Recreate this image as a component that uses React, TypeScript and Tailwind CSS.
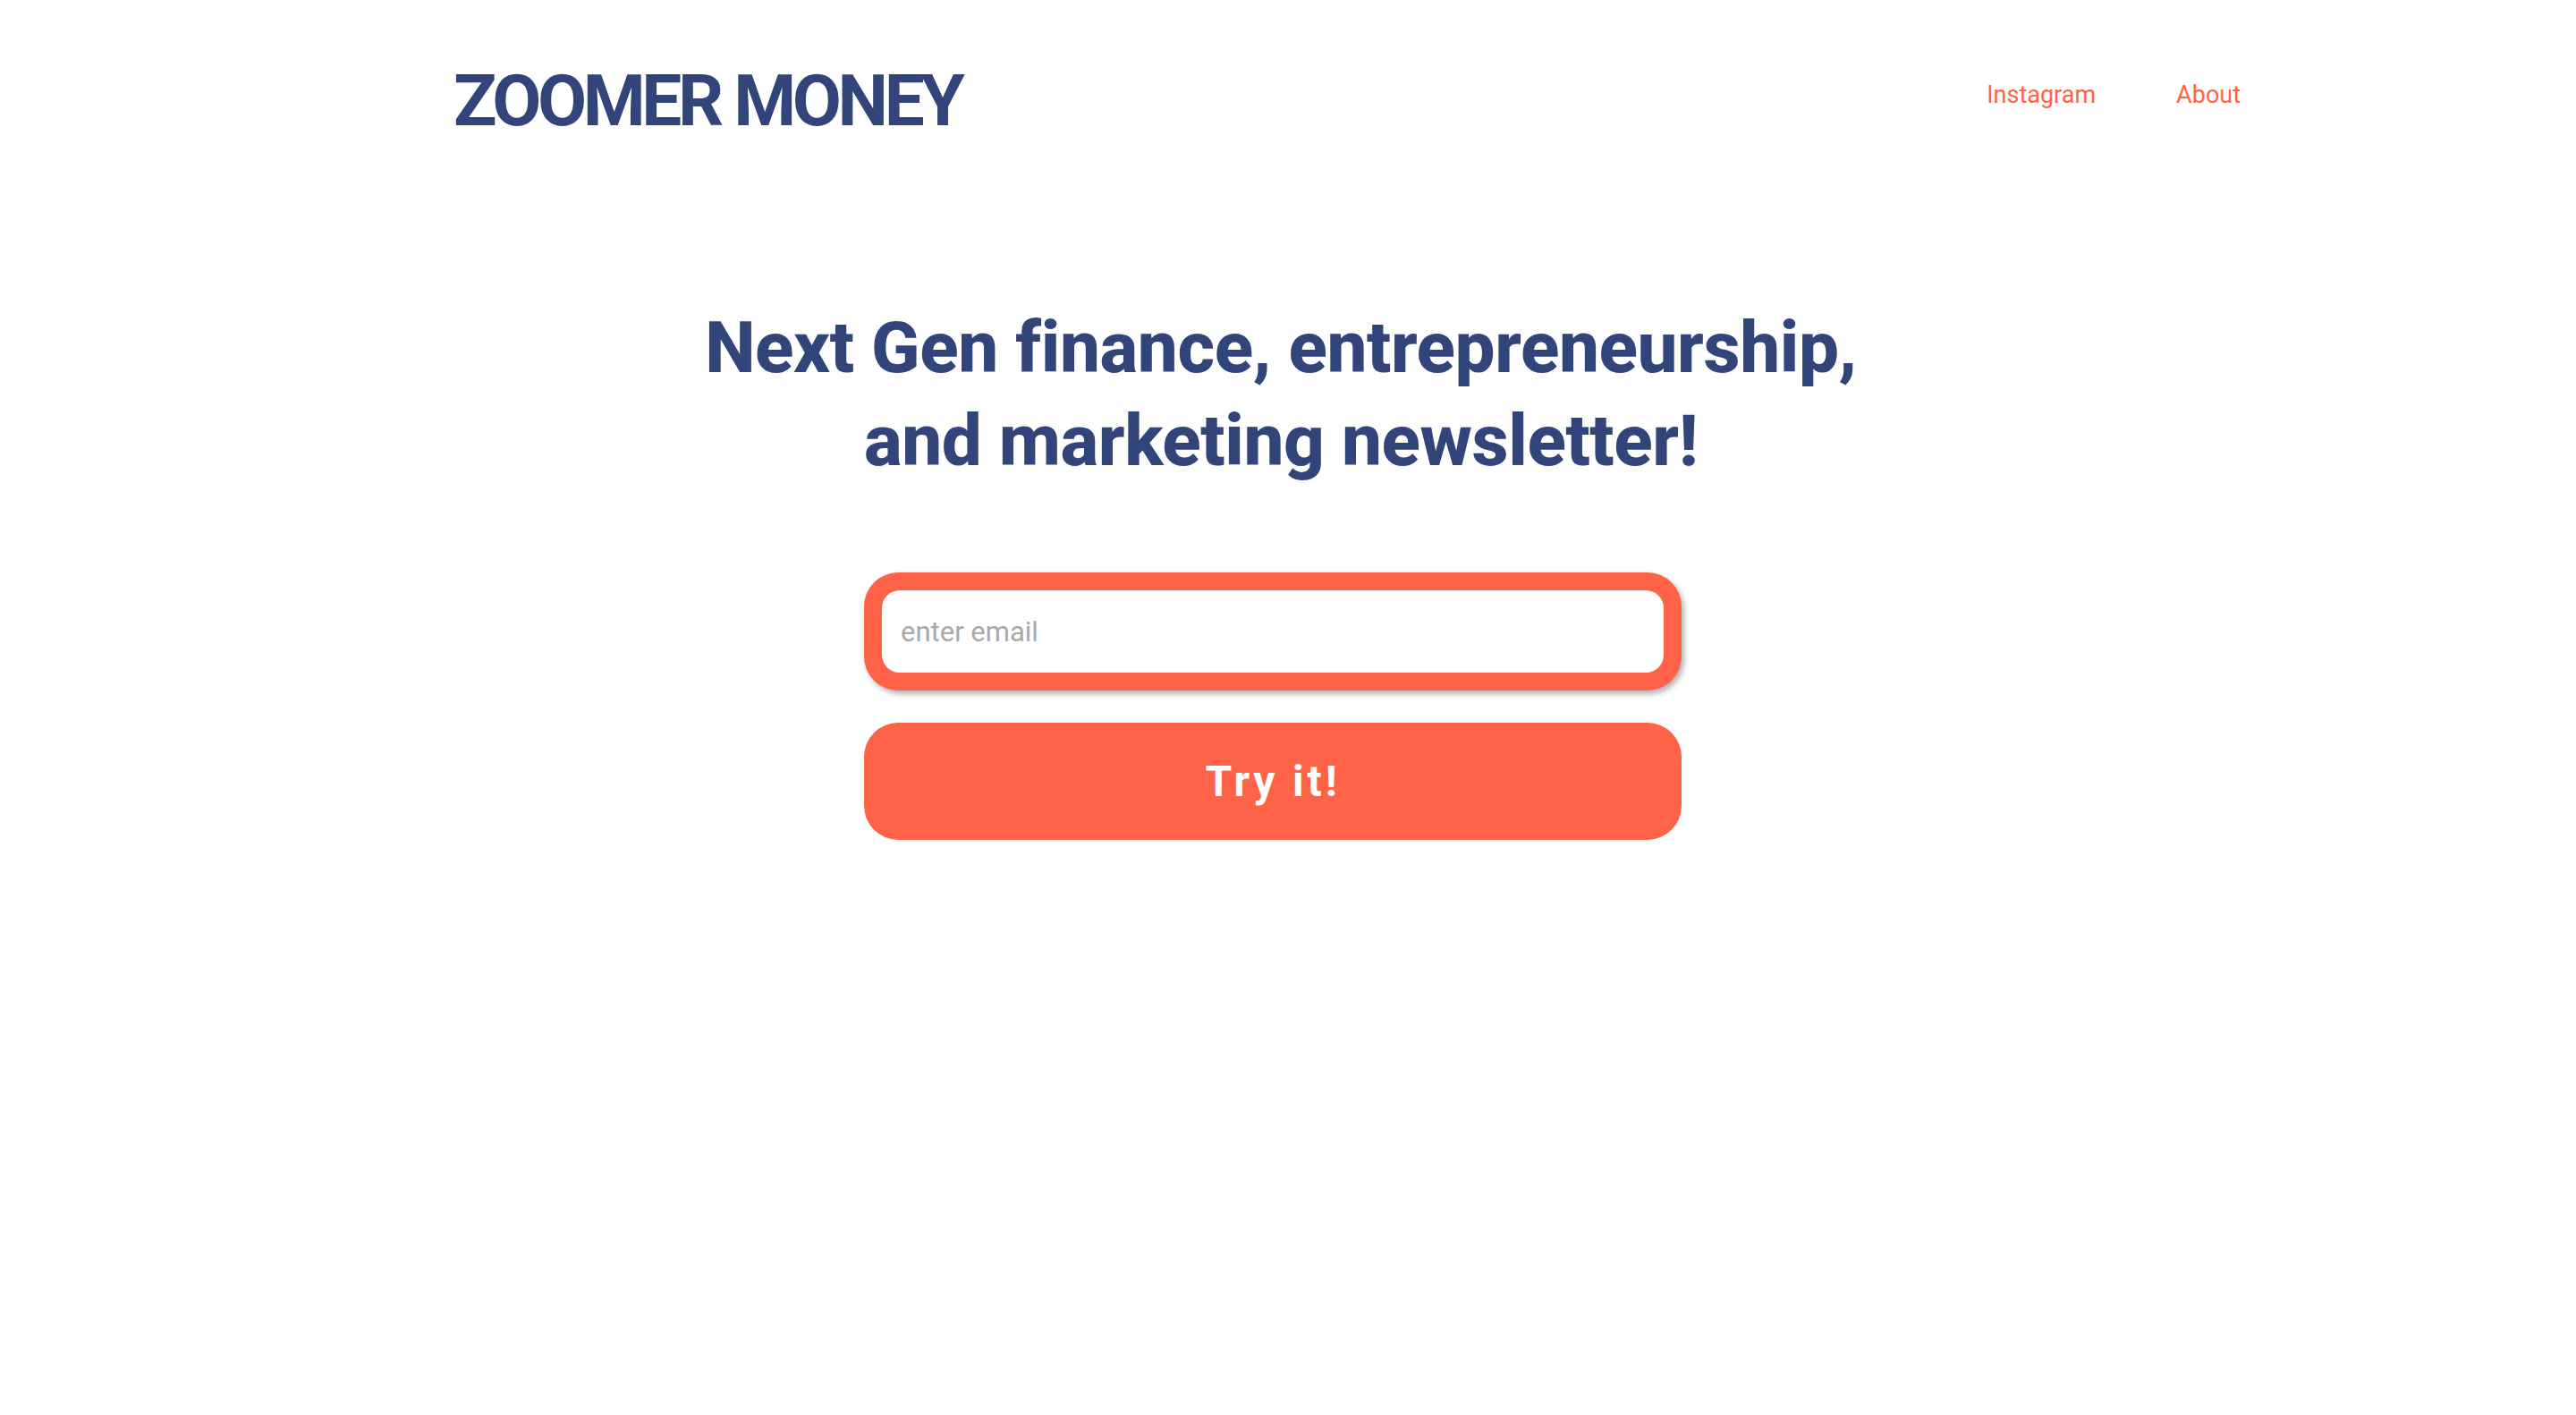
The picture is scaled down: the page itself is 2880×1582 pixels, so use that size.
import React from 'react';

const App = () => {
  return (
    <div className="min-h-screen bg-white font-['Roboto','Liberation_Sans',sans-serif]">
      <header className="flex items-start justify-between pl-[507px] pr-[375px] pt-[73px]">
        <h1 className="text-[80px] font-bold leading-none tracking-[-0.055em] text-[#32457a]">
          ZOOMER MONEY
        </h1>
        <nav className="mt-[20px] flex gap-[90px] text-[27px] leading-none text-[#ff6347]">
          <a href="#">Instagram</a>
          <a href="#">About</a>
        </nav>
      </header>

      <main className="flex flex-col items-center pr-[16px]">
        <h2 className="mt-[184px] text-center text-[80px] font-[800] leading-[104px] tracking-[-0.005em] text-[#32457a]">
          Next Gen finance, entrepreneurship,
          <br />
          and marketing newsletter!
        </h2>

        <form className="mr-[18px] mt-[95px] flex w-[914px] flex-col gap-[36px]" onSubmit={(e) => e.preventDefault()}>
          <div className="rounded-[38px] bg-[#ff6347] p-[20px] shadow-[3px_4px_6px_rgba(0,0,0,0.3)]">
            <input
              type="email"
              placeholder="enter email"
              className="h-[92px] w-full rounded-[20px] bg-white px-[21px] text-[31px] text-gray-700 outline-none placeholder:text-[#a9a9a9]"
            />
          </div>
          <button
            type="submit"
            className="h-[131px] rounded-[38px] bg-[#ff6347] text-[48px] font-bold tracking-[0.08em] text-white"
          >
            Try it!
          </button>
        </form>
      </main>
    </div>
  );
};

export default App;
